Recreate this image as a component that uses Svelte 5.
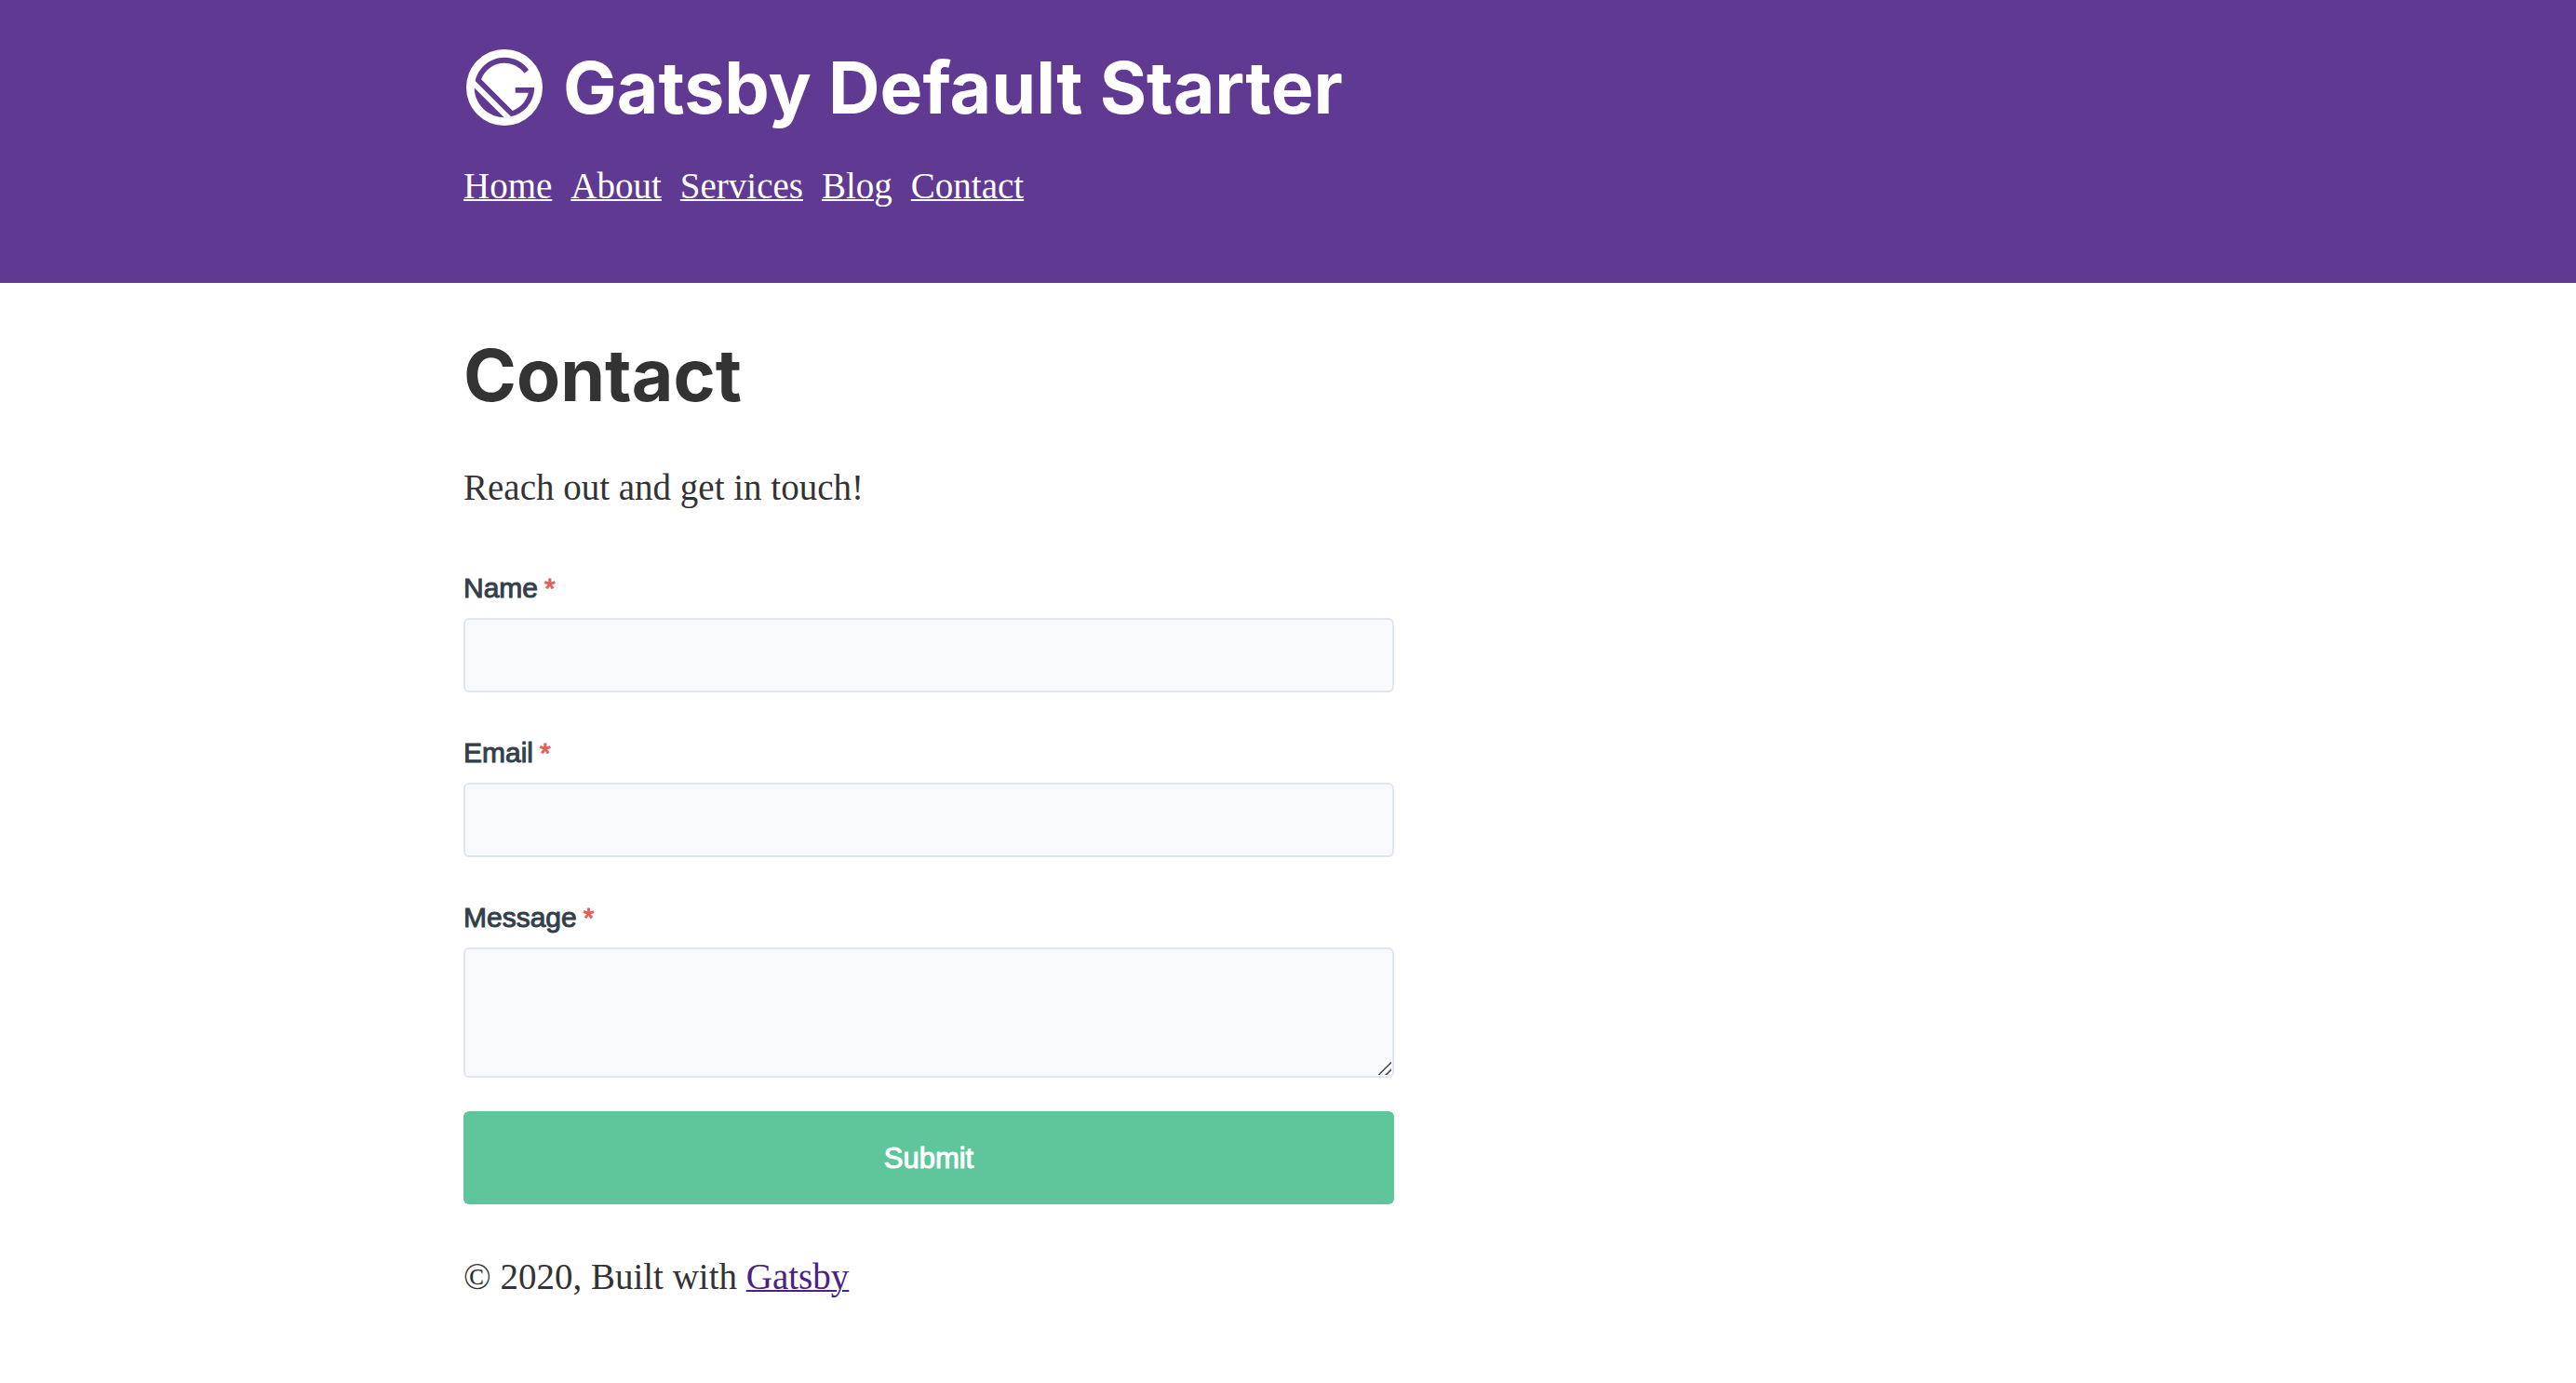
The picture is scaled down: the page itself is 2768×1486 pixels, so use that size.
<script>
  const links = ['Home', 'About', 'Services', 'Blog', 'Contact'];
  const fields = [
    { id: 'name', label: 'Name', type: 'text' },
    { id: 'email', label: 'Email', type: 'email' },
  ];
</script>

<header class="site-header">
  <div class="container header-inner">
    <h1 class="brand">
      <a class="brand-link" href="#home">
        <svg class="logo" viewBox="0 0 28 28" aria-hidden="true">
          <circle class="logo-disc" cx="14" cy="14" r="14" />
          <path
            class="logo-mark"
            d="M6.2 21.8C4.1 19.7 3 16.9 3 14.2L13.9 25c-2.8-.1-5.6-1.1-7.7-3.2zm10.2 2.9L3.3 11.6C4.4 6.7 8.8 3 14 3c3.7 0 6.9 1.8 8.9 4.5l-1.5 1.3C19.7 6.5 17 5 14 5c-3.9 0-7.2 2.5-8.5 6L17 22.5c2.9-1 5.1-3.5 5.8-6.5H18v-2h7c0 5.2-3.7 9.6-8.6 10.7z"
          />
        </svg>
        <span>Gatsby Default Starter</span>
      </a>
    </h1>
    <nav class="nav">
      {#each links as link}
        <a class="nav-link" href={'#' + link.toLowerCase()}>{link}</a>
      {/each}
    </nav>
  </div>
</header>

<div class="container">
  <main class="content">
    <h1 class="title">Contact</h1>
    <p class="intro">Reach out and get in touch!</p>
    <form class="form">
      {#each fields as field}
        <div class="field">
          <label class="label" for={field.id}>{field.label}<span class="required">*</span></label>
          <input class="control" id={field.id} name={field.id} type={field.type} required />
        </div>
      {/each}
      <div class="field">
        <label class="label" for="message">Message<span class="required">*</span></label>
        <textarea class="control message" id="message" name="message" required></textarea>
      </div>
      <button class="submit" type="submit">Submit</button>
    </form>
  </main>
  <footer class="footer">© 2020, Built with <a class="footer-link" href="#gatsby">Gatsby</a></footer>
</div>

<style>
  :global(body) {
    margin: 0;
    background: #fff;
    color: #333;
    font-family: Georgia, 'Liberation Serif', serif;
    font-size: 39px;
    line-height: 60px;
  }

  .container {
    box-sizing: border-box;
    max-width: 1920px;
    margin: 0 auto;
    padding: 0 74px;
  }

  .site-header {
    background: #603992;
  }

  .header-inner {
    padding-top: 49px;
    padding-bottom: 74px;
  }

  .brand,
  .title {
    margin: 0;
    font-family: Inter, sans-serif;
    font-size: 77px;
    font-weight: 700;
    line-height: 90px;
  }

  .brand-link {
    display: flex;
    align-items: center;
    gap: 22px;
    padding-left: 3px;
    color: #fff;
    text-decoration: none;
  }

  .logo {
    flex: none;
    width: 82px;
    height: 82px;
  }

  .logo-disc {
    fill: #fff;
  }

  .logo-mark {
    fill: #603992;
  }

  .nav {
    display: flex;
    flex-wrap: wrap;
    gap: 20px;
    margin-top: 31px;
  }

  .nav-link {
    color: #fff;
    text-decoration: underline;
    text-decoration-thickness: 2px;
  }

  .content {
    padding-top: 54px;
  }

  .intro {
    margin: 46px 0 58px;
  }

  .form {
    max-width: 1000px;
    font-family: 'Helvetica Neue', 'Liberation Sans', sans-serif;
  }

  .field {
    display: flex;
    flex-direction: column;
    gap: 12px;
    margin-bottom: 45px;
  }

  .field:last-of-type {
    margin-bottom: 36px;
  }

  .label {
    color: #343f4a;
    font-size: 30px;
    line-height: 40px;
    -webkit-text-stroke: 1px #343f4a;
  }

  .required {
    margin-left: 7px;
    color: #e2605b;
    -webkit-text-stroke: 1px #e2605b;
  }

  .control {
    box-sizing: border-box;
    width: 100%;
    height: 80px;
    margin: 0;
    padding: 16px 24px;
    border: 2px solid #e0e6ef;
    border-radius: 6px;
    outline: none;
    background: #f7f9fd;
    color: #343f4a;
    font: inherit;
    font-size: 30px;
    line-height: 40px;
  }

  .message {
    display: block;
    height: 140px;
    resize: vertical;
  }

  .message::-webkit-resizer {
    background: linear-gradient(
        135deg,
        transparent 46%,
        #555 48%,
        #555 54%,
        transparent 56%,
        transparent 74%,
        #555 76%,
        #555 82%,
        transparent 84%
      )
      0 0 / 14px 14px no-repeat;
  }

  .submit {
    display: block;
    width: 100%;
    padding: 31px 30px 29px;
    border: 0;
    border-radius: 6px;
    background: #5fc69b;
    color: #fff;
    font-family: inherit;
    font-size: 31px;
    line-height: 40px;
    -webkit-text-stroke: 1px #fff;
  }

  .footer {
    margin-top: 48px;
  }

  .footer-link {
    color: #4b2183;
    text-decoration-thickness: 2px;
  }
</style>
